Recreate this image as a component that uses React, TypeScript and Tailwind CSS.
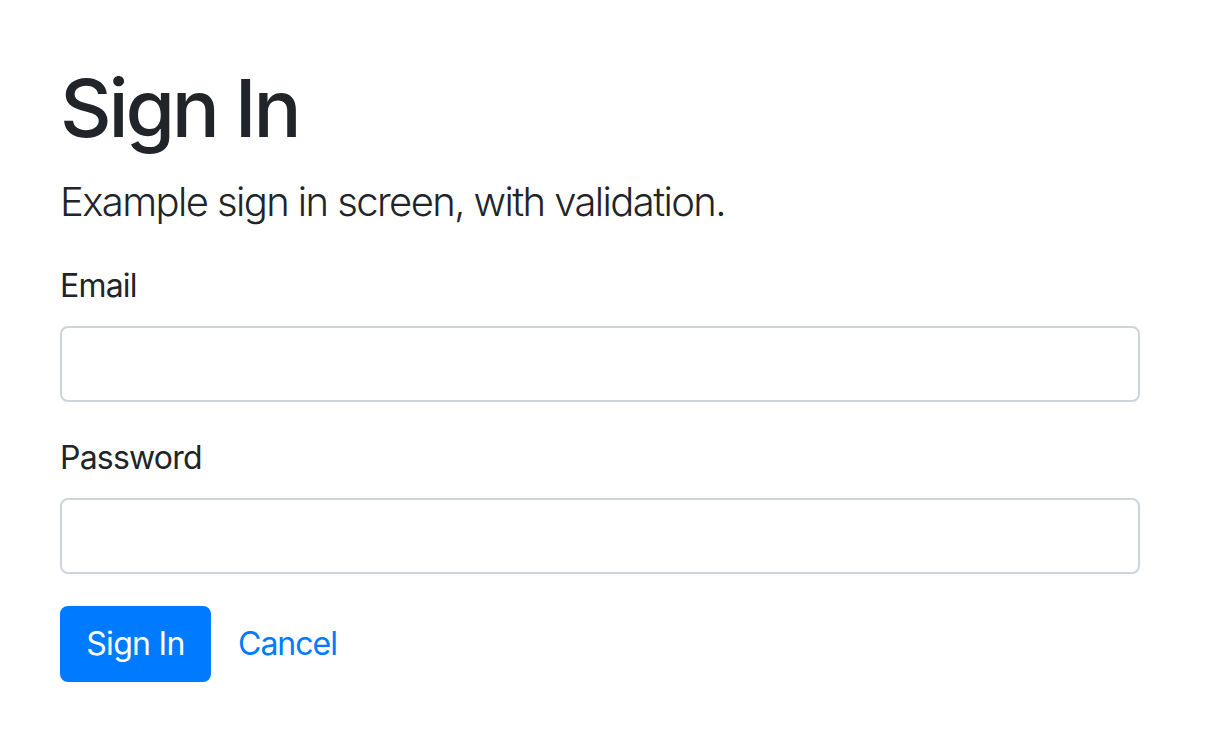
export default function App() {
  return (
    <div className="min-h-screen bg-white text-[#212529] font-['Inter','Helvetica_Neue','Liberation_Sans',sans-serif]">
      <div className="px-[60px] pt-[60px] w-[1200px]">
        <h1 className="text-[80px] leading-[96px] font-medium mb-4 tracking-[-3.2px]">Sign In</h1>
        <p className="text-[40px] leading-[60px] font-light mb-[30px] tracking-[-1.6px]">Example sign in screen, with validation.</p>
        <form className="w-[1080px]" onSubmit={e => e.preventDefault()}>
          <div className="mb-8">
            <label className="block text-[32px] leading-[48px] mb-4 tracking-[-0.8px]">Email</label>
            <input
              type="email"
              className="block w-full h-[76px] px-6 text-[32px] border-2 border-[#ced4da] rounded-lg bg-white focus:outline-none"
            />
          </div>
          <div className="mb-8">
            <label className="block text-[32px] leading-[48px] mb-4 tracking-[-0.8px]">Password</label>
            <input
              type="password"
              className="block w-full h-[76px] px-6 text-[32px] border-2 border-[#ced4da] rounded-lg bg-white focus:outline-none"
            />
          </div>
          <div className="flex items-center">
            <button type="submit" className="w-[151px] h-[76px] text-[32px] text-white bg-[#007bff] rounded-lg tracking-[-0.7px]">
              Sign In
            </button>
            <a href="#" className="ml-[27px] text-[32px] text-[#007bff] tracking-[-1px]">Cancel</a>
          </div>
        </form>
      </div>
    </div>
  );
}
